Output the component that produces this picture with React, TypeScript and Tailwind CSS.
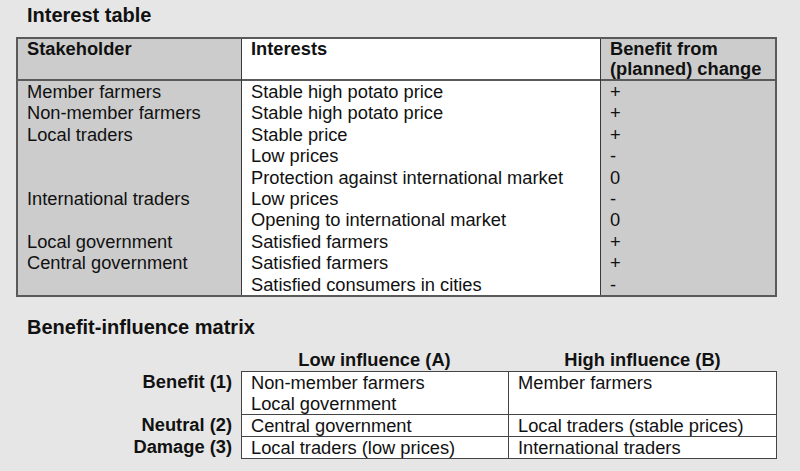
const interestRows = [
  { who: "Member farmers", what: "Stable high potato price", benefit: "+" },
  { who: "Non-member farmers", what: "Stable high potato price", benefit: "+" },
  { who: "Local traders", what: "Stable price", benefit: "+" },
  { who: "", what: "Low prices", benefit: "-" },
  { who: "", what: "Protection against international market", benefit: "0" },
  { who: "International traders", what: "Low prices", benefit: "-" },
  { who: "", what: "Opening to international market", benefit: "0" },
  { who: "Local government", what: "Satisfied farmers", benefit: "+" },
  { who: "Central government", what: "Satisfied farmers", benefit: "+" },
  { who: "", what: "Satisfied consumers in cities", benefit: "-" },
];

const matrixRows = [
  { label: "Benefit (1)", low: ["Non-member farmers", "Local government"], high: ["Member farmers", ""] },
  { label: "Neutral (2)", low: ["Central government"], high: ["Local traders (stable prices)"] },
  { label: "Damage (3)", low: ["Local traders (low prices)"], high: ["International traders"] },
];

function Line({ text }: { text: string }) {
  return <div className="h-[21.4px] leading-[21.4px] whitespace-nowrap">{text || "\u00a0"}</div>;
}

export default function App() {
  return (
    <div
      className="w-[800px] h-[471px] bg-[#e6e6e6] text-[#111] overflow-hidden"
      style={{ fontFamily: '"Liberation Sans", Arial, sans-serif' }}
    >
      {/* Interest table */}
      <h2 className="pl-[27px] pt-[3px] h-[27px] text-[20px] leading-[24px] font-bold">Interest table</h2>

      <div className="ml-[16px] mt-[10px] w-[761px] flex border-2 border-[#5a5a5a] text-[18.3px]">
        <div className="w-[223px] bg-[#cccccc]">
          <div className="h-[40px] pl-[9px] font-bold leading-[20px] border-b-2 border-[#5a5a5a] box-content">
            Stakeholder
          </div>
          <div className="pl-[9px]">
            {interestRows.map((r, i) => (
              <Line key={i} text={r.who} />
            ))}
          </div>
        </div>

        <div className="w-[359px] bg-white border-l border-[#3a3a3a]">
          <div className="h-[40px] pl-[9px] font-bold leading-[20px] border-b-2 border-[#5a5a5a] box-content">
            Interests
          </div>
          <div className="pl-[9px]">
            {interestRows.map((r, i) => (
              <Line key={i} text={r.what} />
            ))}
          </div>
        </div>

        <div className="w-[175px] bg-[#cccccc] border-l border-[#3a3a3a]">
          <div className="h-[40px] pl-[9px] font-bold leading-[20px] border-b-2 border-[#5a5a5a] box-content">
            Benefit from
            <br />
            (planned) change
          </div>
          <div className="pl-[9px]">
            {interestRows.map((r, i) => (
              <Line key={i} text={r.benefit} />
            ))}
          </div>
        </div>
      </div>

      {/* Benefit-influence matrix */}
      <h2 className="pl-[27px] mt-[18px] h-[24px] text-[20px] leading-[24px] font-bold">Benefit-influence matrix</h2>

      <div className="mt-[10px] text-[18.3px]">
        <div className="flex font-bold leading-[21px] h-[22px]">
          <div className="w-[241px]" />
          <div className="w-[267px] text-center">Low influence (A)</div>
          <div className="w-[269px] text-center">High influence (B)</div>
        </div>

        {matrixRows.map((row, i) => (
          <div key={row.label} className="flex leading-[21px]">
            <div className="w-[241px] pr-[9px] text-right font-bold">{row.label}</div>
            <div
              className={`w-[267px] bg-white border-l border-t border-[#444] pl-[9px] ${
                i === matrixRows.length - 1 ? "border-b" : ""
              }`}
            >
              {row.low.map((t, j) => (
                <div key={j} className="h-[21px] whitespace-nowrap">{t || "\u00a0"}</div>
              ))}
            </div>
            <div
              className={`w-[269px] bg-white border-l border-r border-t border-[#444] pl-[9px] ${
                i === matrixRows.length - 1 ? "border-b" : ""
              }`}
            >
              {row.high.map((t, j) => (
                <div key={j} className="h-[21px] whitespace-nowrap">{t || "\u00a0"}</div>
              ))}
            </div>
          </div>
        ))}
      </div>
    </div>
  );
}
